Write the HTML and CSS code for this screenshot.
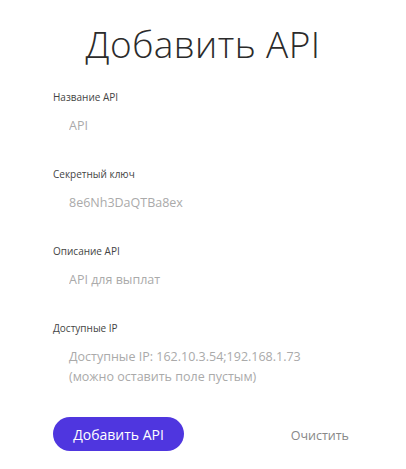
FILE: index.html
```html
<!DOCTYPE html>
<html lang="ru">
<head>
	<meta charset="UTF-8">
	<meta name="viewport" content="width=device-width, initial-scale=1.0">
	<title>Добавить API</title>
	<link rel="stylesheet" href="styles.css">
</head>
<body>
	<div class="container">
		<h1>Добавить API</h1>

		<!-- Форма добавления API -->
		<form id="addApiForm" class="api-form">
			<div class="field">
				<label for="apiName">Название API</label>
				<input type="text" id="apiName" placeholder="API" />
			</div>
			<div class="field">
				<label for="apiKey">Секретный ключ</label>
				<input type="text" id="apiKey" placeholder="8e6Nh3DaQTBa8ex" />
			</div>
			<div class="field">
				<label for="apiDesc">Описание API</label>
				<input type="text" id="apiDesc" placeholder="API для выплат" />
			</div>
			<div class="field">
				<label for="apiIps">Доступные IP</label>
				<textarea id="apiIps" rows="2" placeholder="Доступные IP: 162.10.3.54;192.168.1.73&#10;(можно оставить поле пустым)"></textarea>
			</div>

			<div class="actions">
				<button class="button" type="submit">Добавить API</button>
				<button class="link-button" type="reset">Очистить</button>
			</div>
		</form>
	</div>
</body>
</html>
```

FILE: styles.css
```css
body {
	font-family: "Open Sans", sans-serif;
	margin: 0;
	padding: 0;
	background-color: #fff;
	color: #333;
}
.container {
	width: 300px;
	margin: 0 auto;
	padding: 16px 0 0 0;
}
h1 {
	font-weight: 300;
	font-size: 37px;
	line-height: 56px;
	margin: 0 0 17px 0;
	text-align: center;
	color: #2b2b2b;
	letter-spacing: 0.4px;
}
.field {
	display: flex;
	flex-direction: column;
	margin-bottom: 19px;
}
.field label {
	font-size: 10px;
	line-height: 16px;
	color: #444;
}
.field input, .field textarea {
	font-family: "Open Sans", sans-serif;
	font-size: 12.5px;
	line-height: 20px;
	border: none;
	outline: none;
	padding: 11px 16px;
	margin: 0;
	resize: none;
	color: #333;
	background: transparent;
}
.field input::placeholder, .field textarea::placeholder {
	color: #aaa;
}
.field textarea {
	height: 40px;
	overflow: hidden;
}
.actions {
	display: flex;
	align-items: center;
	justify-content: space-between;
	margin-top: 14px;
}
.button {
	background-color: #4f36df;
	color: white;
	font-family: "Open Sans", sans-serif;
	font-size: 14px;
	border: none;
	border-radius: 17px;
	width: 131px;
	height: 34px;
	cursor: pointer;
}
.link-button {
	background: none;
	border: none;
	font-family: "Open Sans", sans-serif;
	font-size: 12.5px;
	color: #888;
	padding: 0 4px 0 0;
	margin: 2px 0 0 0;
	cursor: pointer;
}
```
